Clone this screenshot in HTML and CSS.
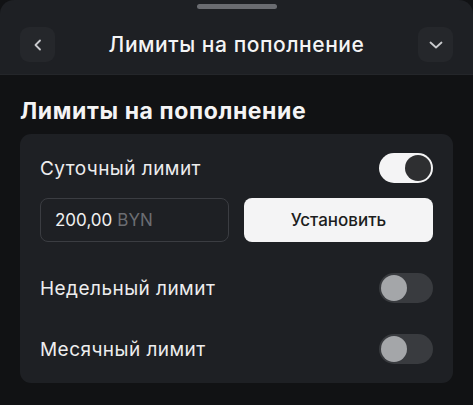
FILE: index.html
```html
<!DOCTYPE html>
<html lang="ru">
<head>
<meta charset="utf-8">
<link rel="stylesheet" href="styles.css">
</head>
<body>
<div class="sheet">
  <header class="header">
    <div class="grabber"></div>
    <div class="bar">
      <button class="icon-btn" aria-label="Назад">
        <svg width="14" height="14" viewBox="0 0 14 14"><path d="M9 2.5 L4.5 7 L9 11.5" fill="none" stroke="#c9cacd" stroke-width="1.8" stroke-linecap="round" stroke-linejoin="round"/></svg>
      </button>
      <h1 class="title">Лимиты на пополнение</h1>
      <button class="icon-btn" aria-label="Свернуть">
        <svg width="16" height="14" viewBox="0 0 16 14"><path d="M2.5 4.5 L8 9.5 L13.5 4.5" fill="none" stroke="#c9cacd" stroke-width="1.8" stroke-linecap="round" stroke-linejoin="round"/></svg>
      </button>
    </div>
  </header>
  <main class="content">
    <h2 class="section-title">Лимиты на пополнение</h2>
    <section class="card">
      <div class="row">
        <span class="label">Суточный лимит</span>
        <span class="toggle on"><span class="knob"></span></span>
      </div>
      <div class="input-row">
        <div class="amount"><span class="value">200,00</span> <span class="cur">BYN</span></div>
        <button class="set-btn">Установить</button>
      </div>
      <div class="row row-gap">
        <span class="label">Недельный лимит</span>
        <span class="toggle"><span class="knob"></span></span>
      </div>
      <div class="row row-gap">
        <span class="label">Месячный лимит</span>
        <span class="toggle"><span class="knob"></span></span>
      </div>
    </section>
  </main>
</div>
</body>
</html>
```

FILE: styles.css
```css
* { box-sizing: border-box; }
html, body {
  margin: 0;
  padding: 0;
  background: #111214;
  font-family: Inter, "Noto Sans", "Liberation Sans", sans-serif;
  color: #f2f2f3;
}
.sheet {
  width: 473px;
  height: 405px;
  overflow: hidden;
}
.header {
  height: 75px;
  background: #1e2024;
  border-radius: 14px 14px 0 0;
  padding-top: 4px;
  border-bottom: 1px solid #24262a;
}
.grabber {
  width: 80px;
  height: 5px;
  border-radius: 3px;
  background: #6a6c71;
  margin: 0 auto;
}
.bar {
  display: flex;
  align-items: center;
  justify-content: space-between;
  padding: 18px 20px 0 20px;
}
.icon-btn {
  width: 35px;
  height: 35px;
  border: none;
  border-radius: 9px;
  background: #25272b;
  display: flex;
  align-items: center;
  justify-content: center;
  padding: 0;
}
.title {
  margin: 0;
  font-size: 21px;
  font-weight: 500;
  letter-spacing: 0.55px;
  color: #f4f4f5;
}
.content {
  padding: 22px 20px 0 20px;
}
.section-title {
  margin: 0 0 9px 0;
  font-size: 23px;
  line-height: 28px;
  font-weight: 700;
  letter-spacing: 0.6px;
  color: #f4f4f5;
}
.card {
  background: #1e2024;
  border-radius: 11px;
  padding: 19px 20px 19px 20px;
  display: flex;
  flex-direction: column;
}
.row {
  height: 30px;
  display: flex;
  align-items: center;
  justify-content: space-between;
}
.row-gap { margin-top: 31px; }
.label {
  font-size: 19px;
  font-weight: 400;
  letter-spacing: 0.45px;
  color: #ededee;
}
.toggle {
  width: 54px;
  height: 30px;
  border-radius: 15px;
  background: #393b3f;
  position: relative;
}
.toggle .knob {
  position: absolute;
  top: 2px;
  left: 2px;
  width: 26px;
  height: 26px;
  border-radius: 50%;
  background: #a4a6a9;
}
.toggle.on {
  background: #f4f4f5;
}
.toggle.on .knob {
  left: auto;
  right: 2px;
  background: #2e2f31;
}
.input-row {
  margin-top: 15px;
  display: flex;
  gap: 15px;
}
.amount {
  width: 189px;
  height: 44px;
  border: 1px solid #3b3d42;
  border-radius: 8px;
  padding-left: 14px;
  display: flex;
  align-items: center;
  font-size: 17px;
}
.amount .value { color: #f0f0f1; }
.amount .cur { color: #6b6d72; margin-left: 5px; }
.set-btn {
  flex: 1;
  height: 44px;
  border: none;
  border-radius: 8px;
  background: #f4f4f5;
  color: #1c1d20;
  font-family: inherit;
  font-size: 17px;
  font-weight: 500;
  padding: 0;
}
```
